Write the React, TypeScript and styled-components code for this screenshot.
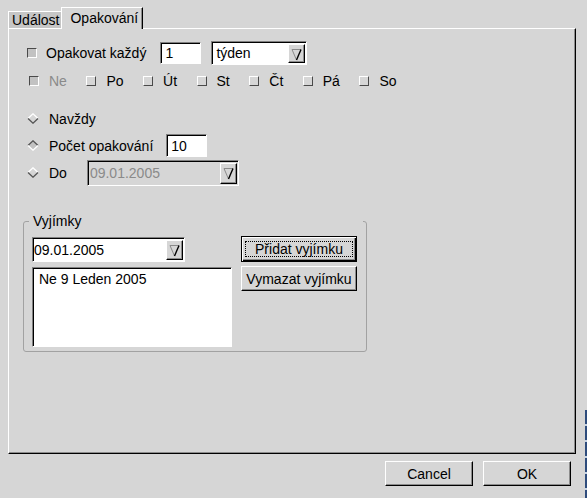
import styled, { createGlobalStyle, css } from 'styled-components';

const BG = '#d6d6d6';

const days = [
  { id: 'ne', label: 'Ne', disabled: true },
  { id: 'po', label: 'Po' },
  { id: 'ut', label: 'Út' },
  { id: 'st', label: 'St' },
  { id: 'ct', label: 'Čt' },
  { id: 'pa', label: 'Pá' },
  { id: 'so', label: 'So' },
];

const GlobalStyle = createGlobalStyle`
  html, body {
    margin: 0;
    padding: 0;
    background: ${BG};
  }
  body {
    font-family: "Liberation Sans", Arial, Helvetica, sans-serif;
    font-size: 14px;
    color: #000;
  }
  * { box-sizing: border-box; }
`;

const sunken = css`
  border: 1px solid;
  border-color: #808080 #ffffff #ffffff #808080;
  box-shadow: inset 1px 1px 0 #000;
`;

const raised = css`
  border: 1px solid;
  border-color: #ffffff #000000 #000000 #ffffff;
  box-shadow: inset -1px -1px 0 #8c8c8c;
`;

function Arrow() {
  return (
    <svg width="11" height="14" viewBox="0 0 11 14">
      <path d="M1 2.5 H10" stroke="#8a8a8a" fill="none" />
      <path d="M1 2.5 L5.5 13" stroke="#8a8a8a" fill="none" />
      <path d="M10 2.5 L5.5 13" stroke="#000" strokeWidth={1.4} fill="none" />
    </svg>
  );
}

function Diamond({ on }: { on?: boolean }) {
  const top = on ? '#555555' : '#ffffff';
  const bottom = on ? '#ffffff' : '#555555';
  return (
    <svg width="12" height="11" viewBox="0 0 12 11">
      <polygon points="6,0.8 11,5.5 6,10.2 1,5.5" fill={on ? '#c2c2c2' : BG} />
      <polyline points="1,5.5 6,0.8 11,5.5" fill="none" stroke={top} strokeWidth={1.3} />
      <polyline points="1,5.5 6,10.2 11,5.5" fill="none" stroke={bottom} strokeWidth={1.3} />
    </svg>
  );
}

export default function App() {
  return (
    <Window>
      <GlobalStyle />
      <TabBar>
        <Tab>Událost</Tab>
        <Tab $active>Opakování</Tab>
      </TabBar>

      <Panel>
        <Content>
          <Row $h={24}>
            <Check $sunken />
            <Label $ml={9}>Opakovat každý</Label>
            <TextField $w={41} $h={22} $ml={14}>1</TextField>
            <Combo $w={96} $h={24} $ml={10}>
              <ComboText $pl={4}>týden</ComboText>
              <DropButton><Arrow /></DropButton>
            </Combo>
          </Row>

          <DayRow>
            {days.map((d) => (
              <DayItem key={d.id}>
                <Check $sunken={d.disabled} />
                <Label $ml={10} $disabled={d.disabled}>{d.label}</Label>
              </DayItem>
            ))}
          </DayRow>

          <Radios>
            <Row $h={27}>
              <Diamond />
              <Label $ml={10}>Navždy</Label>
            </Row>
            <Row $h={27}>
              <Diamond on />
              <Label $ml={10}>Počet opakování</Label>
              <TextField $w={41} $h={23} $ml={13}>10</TextField>
            </Row>
            <Row $h={27}>
              <Diamond />
              <Label $ml={10}>Do</Label>
              <Combo $w={152} $h={26} $ml={20} $disabled>
                <ComboText $pl={2} $disabled>09.01.2005</ComboText>
                <DropButton><Arrow /></DropButton>
              </Combo>
            </Row>
          </Radios>

          <Group>
            <Legend>Vyjímky</Legend>
            <Frame>
              <LeftCol>
                <Combo $w={153} $h={25}>
                  <ComboText $pl={1}>09.01.2005</ComboText>
                  <DropButton><Arrow /></DropButton>
                </Combo>
                <ListBox>
                  <ListItem>Ne 9 Leden 2005</ListItem>
                </ListBox>
              </LeftCol>
              <RightCol>
                <PushButton $w={116} $h={26} $default>
                  <Focus>Přidat vyjímku</Focus>
                </PushButton>
                <PushButton $w={116} $h={25}>Vymazat vyjímku</PushButton>
              </RightCol>
            </Frame>
          </Group>
        </Content>
      </Panel>

      <Footer>
        <PushButton $w={88} $h={25}>Cancel</PushButton>
        <PushButton $w={88} $h={25}>OK</PushButton>
      </Footer>

      <DesktopEdge />
    </Window>
  );
}

const Window = styled.div`
  position: relative;
  width: 587px;
  height: 498px;
  background: ${BG};
  display: flex;
  flex-direction: column;
  overflow: hidden;
`;

const TabBar = styled.div`
  display: flex;
  align-items: flex-end;
  height: 28px;
  padding-left: 8px;
`;

const Tab = styled.div<{ $active?: boolean }>`
  position: relative;
  z-index: 1;
  display: flex;
  align-items: center;
  line-height: 1;
  border-top: 1px solid #ffffff;
  border-left: 1px solid #ffffff;
  ${({ $active }) =>
    $active
      ? css`
          height: 22px;
          margin-bottom: -1px;
          padding: 0 4px 2px 8px;
          background: ${BG};
          border-right: 1px solid #000;
          box-shadow: inset -1px 0 0 #8c8c8c;
        `
      : css`
          height: 17px;
          padding: 0 2px 0 3px;
          background: #c6c6c6;
        `}
`;

const Panel = styled.div`
  margin-left: 8px;
  width: 568px;
  height: 426px;
  border: 1px solid;
  border-color: #ffffff #000000 #000000 #ffffff;
  box-shadow: inset -1px -1px 0 #8c8c8c;
`;

const Content = styled.div`
  display: flex;
  flex-direction: column;
  align-items: flex-start;
  padding: 12px 0 0 14px;
`;

const Row = styled.div<{ $h: number }>`
  display: flex;
  align-items: center;
  height: ${({ $h }) => $h}px;
  margin-left: 4px;
`;

const Label = styled.span<{ $ml?: number; $disabled?: boolean }>`
  margin-left: ${({ $ml }) => $ml ?? 0}px;
  color: ${({ $disabled }) => ($disabled ? '#8a8a8a' : '#000')};
  white-space: nowrap;
`;

const Check = styled.span<{ $sunken?: boolean }>`
  display: inline-block;
  width: 10px;
  height: 10px;
  flex: none;
  border: 1px solid;
  ${({ $sunken }) =>
    $sunken
      ? css`
          border-color: #4a4a4a #ffffff #ffffff #4a4a4a;
          background: #c2c2c2;
        `
      : css`
          border-color: #ffffff #4a4a4a #4a4a4a #ffffff;
          background: ${BG};
        `}
`;

const TextField = styled.div<{ $w: number; $h: number; $ml?: number }>`
  ${sunken};
  width: ${({ $w }) => $w}px;
  height: ${({ $h }) => $h}px;
  margin-left: ${({ $ml }) => $ml ?? 0}px;
  background: #ffffff;
  display: flex;
  align-items: center;
  padding-left: 4px;
`;

const Combo = styled.div<{ $w: number; $h: number; $ml?: number; $disabled?: boolean }>`
  ${sunken};
  width: ${({ $w }) => $w}px;
  height: ${({ $h }) => $h}px;
  margin-left: ${({ $ml }) => $ml ?? 0}px;
  background: ${({ $disabled }) => ($disabled ? BG : '#ffffff')};
  display: flex;
  align-items: stretch;
`;

const ComboText = styled.span<{ $pl: number; $disabled?: boolean }>`
  flex: 1;
  display: flex;
  align-items: center;
  padding-left: ${({ $pl }) => $pl}px;
  color: ${({ $disabled }) => ($disabled ? '#8a8a8a' : '#000')};
`;

const DropButton = styled.span`
  ${raised};
  width: 17px;
  margin: 2px 1px 1px 0;
  background: ${BG};
  display: flex;
  align-items: center;
  justify-content: center;
`;

const DayRow = styled.div`
  display: flex;
  align-items: center;
  gap: 19.5px;
  height: 16px;
  margin: 8px 0 0 6px;
`;

const DayItem = styled.div`
  display: flex;
  align-items: center;
`;

const Radios = styled.div`
  display: flex;
  flex-direction: column;
  margin-top: 16px;
`;

const Group = styled.div`
  display: flex;
  flex-direction: column;
  margin-top: 27px;
`;

const Legend = styled.span`
  position: relative;
  z-index: 1;
  height: 16px;
  line-height: 16px;
  margin: 0 0 -8px 10px;
`;

const Frame = styled.div`
  position: relative;
  width: 344px;
  height: 131px;
  border: 1px solid #a2a2a2;
  border-radius: 3px;
  padding: 15px 9px 4px 8px;
  display: flex;
  gap: 9px;

  &::before {
    content: '';
    position: absolute;
    top: -1px;
    left: 5px;
    right: 3px;
    height: 1px;
    background: ${BG};
  }
`;

const LeftCol = styled.div`
  display: flex;
  flex-direction: column;
  gap: 5px;
`;

const RightCol = styled.div`
  display: flex;
  flex-direction: column;
  gap: 4px;
  margin-top: -1px;
`;

const ListBox = styled.div`
  ${sunken};
  width: 200px;
  height: 80px;
  background: #ffffff;
  padding: 3px 6px;
`;

const ListItem = styled.div`
  line-height: 16px;
`;

const PushButton = styled.div<{ $w: number; $h: number; $default?: boolean }>`
  width: ${({ $w }) => $w}px;
  height: ${({ $h }) => $h}px;
  background: ${BG};
  display: flex;
  align-items: center;
  justify-content: center;
  white-space: nowrap;
  ${({ $default }) =>
    $default
      ? css`
          border: 1px solid #000;
          box-shadow: inset 1px 1px 0 #ffffff, inset -1px -1px 0 #000, inset -2px -2px 0 #8c8c8c;
        `
      : raised}
`;

const Focus = styled.span`
  display: flex;
  align-items: center;
  justify-content: center;
  width: 108px;
  height: 16px;
  border: 1px dotted #000;
`;

const Footer = styled.div`
  display: flex;
  justify-content: flex-end;
  gap: 10px;
  padding: 7px 16px 0 0;
`;

const DesktopEdge = styled.div`
  position: absolute;
  right: 0;
  top: 410px;
  bottom: 0;
  width: 2px;
  background: repeating-linear-gradient(#2e4c7c 0 14px, #c8d4e4 14px 16px);
`;
